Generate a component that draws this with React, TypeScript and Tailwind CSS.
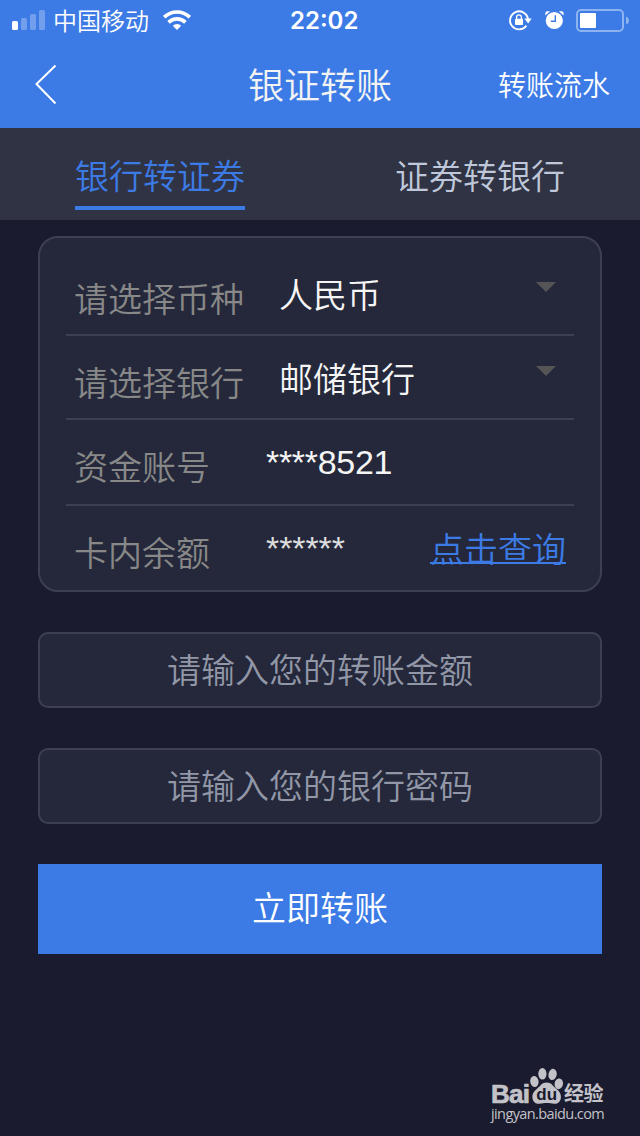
import type { ReactNode } from 'react';

const CJK = "font-['Noto_Sans_CJK_SC',sans-serif]";

function SignalIcon() {
  return (
    <svg className="h-10 w-[33px] shrink-0" viewBox="12 0 33 40" fill="white">
      <rect x="12" y="21" width="6" height="9" rx="1.5" />
      <rect x="21" y="18" width="6" height="12" rx="1.5" opacity=".28" />
      <rect x="30" y="14" width="6" height="16" rx="1.5" opacity=".28" />
      <rect x="39" y="10" width="6" height="20" rx="1.5" opacity=".28" />
    </svg>
  );
}

function WifiIcon() {
  return (
    <svg className="h-10 w-7 shrink-0" viewBox="163 0 28 40" fill="none" stroke="white" strokeWidth="3.7">
      <path d="M164.2 17.2a18.3 18.3 0 0 1 25.6 0" />
      <path d="M168.6 22.4a12 12 0 0 1 16.8 0" />
      <path d="M177 30l-4.2-4.3a6 6 0 0 1 8.4 0z" fill="white" stroke="none" />
    </svg>
  );
}

function RotationLockIcon() {
  return (
    <svg className="h-10 w-6 shrink-0" viewBox="508 0 24 40" fill="none" stroke="white">
      <path d="M526.4 25.6A9 9 0 1 1 528 19.2" strokeWidth="1.9" />
      <path d="M524.3 18.6h7.4l-3.5 4.8z" fill="white" stroke="none" />
      <rect x="515" y="18.8" width="8" height="6.2" rx=".8" fill="white" stroke="none" />
      <path d="M516.6 19v-1.8a2.4 2.4 0 0 1 4.8 0V19" strokeWidth="1.3" />
    </svg>
  );
}

function AlarmIcon() {
  return (
    <svg className="h-10 w-5 shrink-0" viewBox="544 0 20 40">
      <circle cx="554.3" cy="20.5" r="8.6" fill="white" />
      <path d="M545.3 15.5v-2.2q0-2 2-2h2.8zM563.6 15.5v-2.2q0-2-2-2h-2.8z" fill="white" />
      <path d="M555.3 15.2v6h-4.5" fill="none" stroke="#3c7be5" strokeWidth="1.4" />
    </svg>
  );
}

function BatteryIcon() {
  return (
    <svg className="h-10 w-[54px] shrink-0" viewBox="576 0 54 40">
      <rect x="577" y="10" width="46" height="21" rx="4" fill="none" stroke="white" strokeWidth="2" opacity=".42" />
      <rect x="580" y="13" width="16" height="15" rx="1" fill="white" />
      <path d="M626 16.5q3 1.2 3 4t-3 4z" fill="white" opacity=".42" />
    </svg>
  );
}

function Caret() {
  return (
    <svg className="mt-1 mr-[18px] h-[10px] w-5 shrink-0" viewBox="0 0 20 10">
      <path d="M0 0h20l-10 10z" fill="#555555" />
    </svg>
  );
}

function Row({ label, height, children }: { label: string; height: string; children: ReactNode }) {
  return (
    <div className={`flex ${height}`}>
      <span className="ml-2 shrink-0 text-[#888888]">{label}</span>
      {children}
    </div>
  );
}

function Watermark() {
  return (
    <div className="ml-[491px] w-[116px] text-[#c2c2c8]">
      <div className="flex h-10 items-start">
        <span className="mt-[17px] w-[37px] font-['Liberation_Sans',sans-serif] text-[26px] leading-[22px] font-bold tracking-[-0.8px] [-webkit-text-stroke:0.7px_#c2c2c8]">Bai</span>
        <svg className="h-10 w-9 shrink-0" viewBox="528 1066 36 40" fill="#c2c2c8">
          <ellipse cx="534.4" cy="1081.5" rx="4.2" ry="5.6" transform="rotate(-8 534.4 1081.5)" />
          <ellipse cx="542.4" cy="1073.8" rx="4.1" ry="5.8" />
          <ellipse cx="552.6" cy="1074.4" rx="4.1" ry="5.6" transform="rotate(12 552.6 1074.4)" />
          <ellipse cx="558.8" cy="1083.8" rx="4.2" ry="5.4" transform="rotate(10 558.8 1083.8)" />
          <path d="M546.6 1082.4c4.6 0 6 3 8.800 5.600 2.900 2.600 5.500 4.500 5.500 8.900 0 4.400-2.800 6.900-6.700 6.900-3 0-4.600-.7-7.400-.7s-4.400.7-7.600.7c-4 0-6.800-2.500-6.800-6.900 0-4.300 2.600-6.300 5.400-8.900 2.800-2.600 4.400-5.600 8.800-5.600z" />
          <text x="546.7" y="1100" textAnchor="middle" fontSize="17" fontWeight="bold" fill="#1a1b2e" fontFamily="Liberation Sans, sans-serif">du</text>
        </svg>
        <span className="mt-4 text-[20px] leading-[22px] font-bold whitespace-nowrap tracking-[-0.5px]">经验</span>
      </div>
      <div className="font-['Open_Sans',sans-serif] text-[14.5px] leading-[16px] font-medium tracking-[-0.6px] whitespace-nowrap">jingyan.baidu.com</div>
    </div>
  );
}

export default function App() {
  return (
    <div className={`flex h-[1136px] w-[640px] flex-col overflow-hidden bg-[#1a1b2e] font-[350] ${CJK}`}>
      <header className="h-32 bg-[#3c7be5] text-white">
        <div className="flex h-10">
          <div className="flex w-[290px] pl-3">
            <SignalIcon />
            <span className="mr-[14px] ml-2 text-[24px] leading-[40px]">中国移动</span>
            <WifiIcon />
          </div>
          <span className="w-[218px] font-['Inter',sans-serif] text-[24px] leading-[41px] font-semibold">22:02</span>
          <RotationLockIcon />
          <span className="w-3" />
          <AlarmIcon />
          <span className="w-3" />
          <BatteryIcon />
        </div>
        <div className="grid h-[88px] grid-cols-[1fr_auto_1fr] items-center px-[30px]">
          <svg className="ml-1 h-10 w-6" viewBox="34 64 24 40" fill="none" stroke="white" strokeWidth="2">
            <path d="M55.5 65.5L36.5 84l19 19.5" />
          </svg>
          <h1 className="h-[88px] text-[36px] leading-[86px] font-[350] text-[#f3f3f3]">银证转账</h1>
          <button className="text-right text-[28px] leading-[88px]">转账流水</button>
        </div>
      </header>
      <nav className="flex h-[92px] justify-between bg-[#303343] px-[75px] text-[34px] leading-[94px]">
        <button className="flex h-[82px] border-b-4 border-[#3c7be5] text-[#3c7be5]">银行转证券</button>
        <button className="flex h-[82px] border-b-4 border-transparent text-[#bfc8da]">证券转银行</button>
      </nav>
      <main className="px-[38px] pt-4 text-[34px]">
        <section className="h-[356px] divide-y-2 divide-[#3d4052] rounded-[20px] border-2 border-[#3d4052] bg-[#24283a] px-[26px] leading-[40px] text-[#f5f5f5]">
          <Row label="请选择币种" height="h-[98px] pt-10">
            <span className="-mt-1 ml-[35px] flex-1">人民币</span>
            <Caret />
          </Row>
          <Row label="请选择银行" height="h-[84px] pt-[26px]">
            <span className="-mt-1 ml-[35px] flex-1">邮储银行</span>
            <Caret />
          </Row>
          <Row label="资金账号" height="h-[86px] pt-[26px]">
            <span className="-mt-1 ml-14 font-['Liberation_Sans',sans-serif] font-normal tracking-[-0.3px]">****8521</span>
          </Row>
          <Row label="卡内余额" height="h-[84px] pt-[26px]">
            <span className="-mt-1 ml-14 flex-1 font-['Liberation_Sans',sans-serif] font-normal tracking-[-0.1px] text-[#dddddd]">******</span>
            <button className="-mt-1 mr-2 h-[36px] border-b-2 border-[#3c7be5] leading-[40px] text-[#3c7be5]"><span className="flex h-[34px]">点击查询</span></button>
          </Row>
        </section>
        <input className="mt-10 block h-[76px] w-full rounded-[10px] border-2 border-[#3d4052] bg-[#24283a] pb-1 text-center text-white outline-none placeholder:text-[#9297a7]" placeholder="请输入您的转账金额" />
        <input className="mt-10 block h-[76px] w-full rounded-[10px] border-2 border-[#3d4052] bg-[#24283a] pb-1 text-center text-white outline-none placeholder:text-[#9297a7]" placeholder="请输入您的银行密码" />
        <button className="mt-10 block h-[90px] w-full bg-[#3c7be5] pb-1 leading-[84px] text-white">立即转账</button>
      </main>
      <footer className="mt-auto h-[70px]">
        <Watermark />
      </footer>
    </div>
  );
}
